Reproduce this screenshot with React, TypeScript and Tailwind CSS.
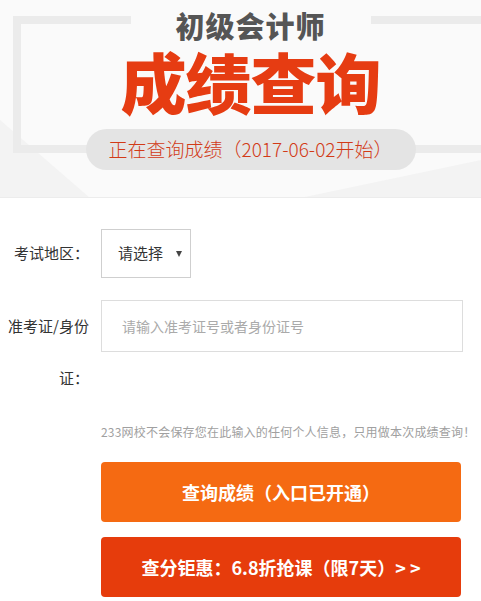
const cjk = { fontFamily: '"Noto Sans CJK SC", "Noto Sans", sans-serif' };

function Banner() {
  return (
    <div className="relative h-[198px] bg-[#fafafa] border-b border-[#ececec] overflow-hidden">
      {/* frame + light diagonals of the banner artwork */}
      <svg className="absolute inset-0" width="481" height="198" viewBox="0 0 481 198">
        <polygon points="0,120 0,198 90,198" fill="#f3f3f3" />
        <polygon points="300,198 481,160 481,198" fill="#f3f3f3" />
        <rect x="13" y="16" width="118" height="8" fill="#ebebeb" />
        <rect x="371" y="16" width="110" height="8" fill="#ebebeb" />
        <rect x="13" y="16" width="8" height="137" fill="#ebebeb" />
        <rect x="13" y="145" width="90" height="8" fill="#ebebeb" />
        <rect x="400" y="145" width="81" height="8" fill="#ebebeb" />
      </svg>
      <div className="relative flex flex-col items-center pl-[20px]" style={cjk}>
        <div className="mt-[7px] text-[29px] leading-[36px] font-black text-[#555555] tracking-[1px]">初级会计师</div>
        <div className="mt-[0px] text-[66px] leading-[74px] font-black text-[#e63c12] tracking-[-1px]">成绩查询</div>
        <div className="mt-[12px] w-[330px] h-[41px] rounded-full bg-[#e4e4e4] flex items-center justify-center text-[19px] font-light text-[#d23a17]">
          正在查询成绩（2017-06-02开始）
        </div>
      </div>
    </div>
  );
}

export default function App() {
  return (
    <div className="w-[481px] h-[601px] bg-white overflow-hidden" style={cjk}>
      <Banner />

      <div className="pt-[31px]">
        {/* region select */}
        <div className="flex items-center">
          <label className="w-[89px] text-right text-[15px] text-[#333333]">考试地区：</label>
          <div className="ml-[12px] w-[90px] h-[49px] border border-[#cfcfcf] flex items-center pl-[16px] pr-[8px] justify-between text-[15px] text-[#333333]">
            <span>请选择</span>
            <span className="w-0 h-0 border-l-[3px] border-r-[3px] border-t-[6px] border-l-transparent border-r-transparent border-t-[#444444]" />
          </div>
        </div>

        {/* id input */}
        <div className="flex items-start mt-[22px]">
          <label className="w-[89px] text-right text-[15px] leading-[52px] text-[#333333] break-all">
            准考证/身份证：
          </label>
          <div className="ml-[12px] w-[362px] h-[52px] border border-[#dddddd] flex items-center pl-[20px] text-[14px] text-[#aaaaaa]">
            请输入准考证号或者身份证号
          </div>
        </div>

        <div className="ml-[101px] mt-[20px] text-[12px] leading-[16px] tracking-[0.2px] text-[#a0a0a0] whitespace-nowrap">
          233网校不会保存您在此输入的任何个人信息，只用做本次成绩查询！
        </div>

        <button className="ml-[101px] mt-[22px] w-[360px] h-[60px] rounded-[4px] bg-[#f56a12] text-white text-[18px] font-bold flex items-center justify-center">
          查询成绩（入口已开通）
        </button>
        <button className="ml-[101px] mt-[15px] w-[360px] h-[60px] rounded-[4px] bg-[#e63c0c] text-white text-[18px] font-bold flex items-center justify-center">
          查分钜惠：6.8折抢课（限7天）&gt; &gt;
        </button>
      </div>
    </div>
  );
}
